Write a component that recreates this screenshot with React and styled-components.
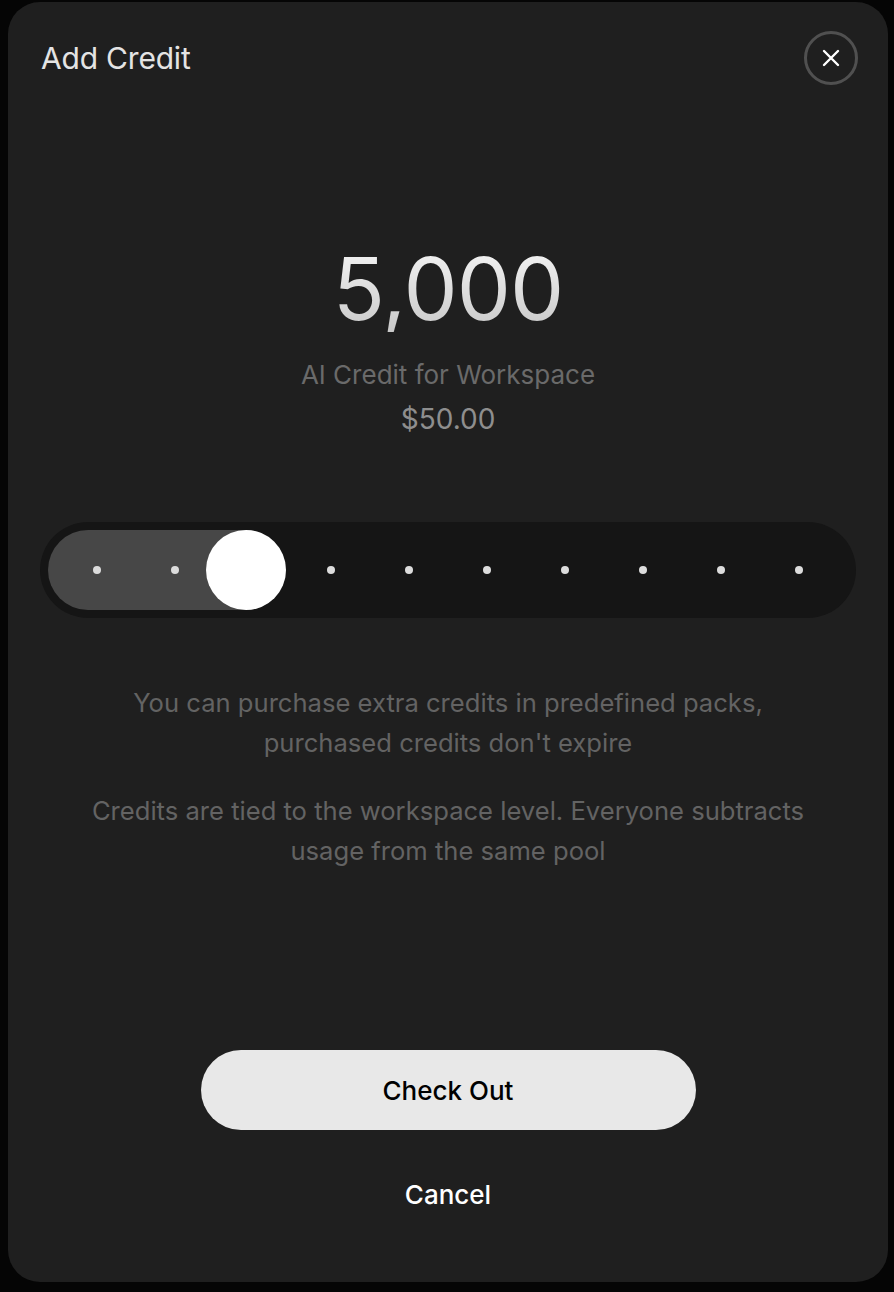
import React from 'react';
import styled, { createGlobalStyle } from 'styled-components';

const Global = createGlobalStyle`
  html, body {
    margin: 0;
    padding: 0;
    background: #050505;
    font-family: Inter, "Noto Sans", "Liberation Sans", sans-serif;
  }
`;

const Page = styled.div`
  padding: 2px 6px 10px 8px;
`;

const Modal = styled.div`
  height: 1280px;
  box-sizing: border-box;
  background: #1f1f1f;
  border-radius: 32px;
  padding: 29px 32px 0 32px;
  display: flex;
  flex-direction: column;
  align-items: stretch;
`;

const Header = styled.div`
  display: flex;
  align-items: center;
  justify-content: space-between;
  height: 54px;
  margin-right: -2px;
`;

const Title = styled.h2`
  margin: 0 0 0 1px;
  font-size: 30px;
  font-weight: 400;
  color: #e4e4e4;
  letter-spacing: -0.2px;
`;

const CloseButton = styled.button`
  width: 54px;
  height: 54px;
  border-radius: 50%;
  border: 3px solid #505050;
  background: transparent;
  display: flex;
  align-items: center;
  justify-content: center;
  padding: 0;
  color: #fff;
  cursor: pointer;
`;

const Hero = styled.div`
  margin-top: 161px;
  display: flex;
  flex-direction: column;
  align-items: center;
`;

const Amount = styled.div`
  font-size: 86px;
  line-height: 86px;
  font-weight: 400;
  letter-spacing: -1px;
  background: linear-gradient(180deg, #f4f4f4 0%, #c9c9c9 100%);
  -webkit-background-clip: text;
  background-clip: text;
  color: transparent;
`;

const Caption = styled.div`
  margin-top: ${p => p.$gap}px;
  font-size: ${p => p.$size}px;
  line-height: 40px;
  color: ${p => p.$color};
`;

const Track = styled.div`
  position: relative;
  margin-top: 83px;
  width: 816px;
  height: 96px;
  box-sizing: border-box;
  padding: 8px;
  border-radius: 48px;
  background: #151515;
`;

const Fill = styled.div`
  position: absolute;
  left: 8px;
  top: 8px;
  height: 80px;
  border-radius: 40px;
  background: #474747;
`;

const Dots = styled.div`
  position: relative;
  height: 80px;
  display: grid;
  grid-template-columns: repeat(10, 78px);
  padding: 0 10px;
`;

const Dot = styled.span`
  justify-self: center;
  align-self: center;
  width: 8px;
  height: 8px;
  border-radius: 50%;
  background: #dcdcdc;
`;

const Knob = styled.div`
  position: absolute;
  top: 8px;
  width: 80px;
  height: 80px;
  border-radius: 50%;
  background: #fff;
`;

const Notes = styled.div`
  margin-top: 65px;
  display: flex;
  flex-direction: column;
  gap: 28px;
  align-items: center;
`;

const Note = styled.p`
  margin: 0;
  text-align: center;
  font-size: 25.6px;
  line-height: 40px;
  color: #636363;
`;

const Actions = styled.div`
  margin-top: auto;
  padding-bottom: 66px;
  display: flex;
  flex-direction: column;
  align-items: center;
  gap: 44px;
`;

const Primary = styled.button`
  width: 495px;
  height: 80px;
  border-radius: 40px;
  border: none;
  background: #e8e8e8;
  color: #000;
  font-family: inherit;
  font-size: 26px;
  font-weight: 500;
  cursor: pointer;
`;

const TextButton = styled.button`
  border: none;
  background: transparent;
  color: #fff;
  font-family: inherit;
  font-size: 26px;
  font-weight: 500;
  line-height: 40px;
  cursor: pointer;
`;

const steps = 10;
const selected = 2;
const slot = 78;

export default function App() {
  const knobLeft = 8 + 10 + selected * slot + slot / 2 - 40 - 7;
  return (
    <Page>
      <Global />
      <Modal>
        <Header>
          <Title>Add Credit</Title>
          <CloseButton aria-label="Close">
            <svg width="20" height="20" viewBox="0 0 20 20" fill="none">
              <path d="M3 3L17 17M17 3L3 17" stroke="#fff" strokeWidth="2.4" strokeLinecap="round" />
            </svg>
          </CloseButton>
        </Header>

        <Hero>
          <Amount>5,000</Amount>
          <Caption $gap={23} $size={26} $color="#6a6a6a">AI Credit for Workspace</Caption>
          <Caption $gap={4} $size={28} $color="#8e8e8e">$50.00</Caption>
          <Track>
            <Fill style={{ width: knobLeft + 80 - 8 }} />
            <Dots>
              {Array.from({ length: steps }).map((_, i) => (
                <Dot key={i} />
              ))}
            </Dots>
            <Knob style={{ left: knobLeft }} />
          </Track>
        </Hero>

        <Notes>
          <Note>
            You can purchase extra credits in predefined packs,
            <br />
            purchased credits don't expire
          </Note>
          <Note>
            Credits are tied to the workspace level. Everyone subtracts
            <br />
            usage from the same pool
          </Note>
        </Notes>

        <Actions>
          <Primary>Check Out</Primary>
          <TextButton>Cancel</TextButton>
        </Actions>
      </Modal>
    </Page>
  );
}
